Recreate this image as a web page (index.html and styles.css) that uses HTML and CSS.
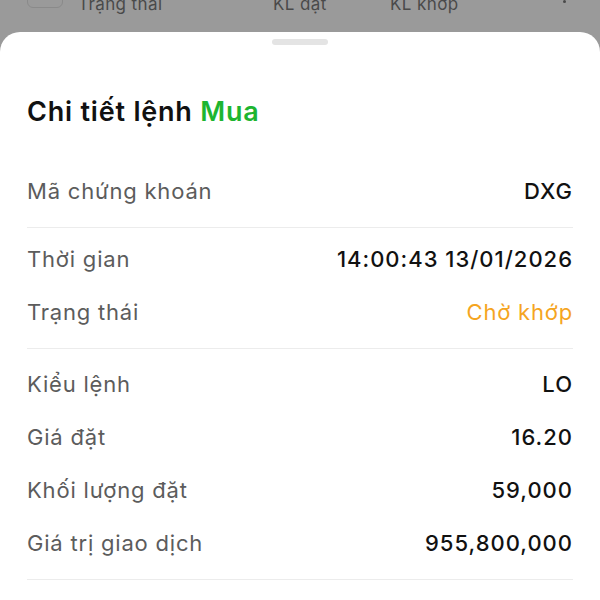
FILE: index.html
```html
<!DOCTYPE html>
<html lang="vi">
<head>
<meta charset="utf-8">
<title>Chi tiết lệnh</title>
<link rel="stylesheet" href="styles.css">
</head>
<body>
<div class="page">
  <div class="bg-head">
    <span class="bg-check"></span>
    <span class="bg-col">Trạng thái</span>
    <span class="bg-col">KL đặt</span>
    <span class="bg-col">KL khớp</span>
    <span class="bg-dot"></span>
  </div>
  <div class="sheet">
    <div class="handle"></div>
    <h1 class="title">Chi tiết lệnh <span class="buy">Mua</span></h1>
    <div class="group">
      <div class="row"><span class="label">Mã chứng khoán</span><span class="value">DXG</span></div>
    </div>
    <div class="group group-tight">
      <div class="row"><span class="label">Thời gian</span><span class="value">14:00:43 13/01/2026</span></div>
      <div class="row"><span class="label">Trạng thái</span><span class="value pending">Chờ khớp</span></div>
    </div>
    <div class="group group-loose">
      <div class="row"><span class="label">Kiểu lệnh</span><span class="value">LO</span></div>
      <div class="row"><span class="label">Giá đặt</span><span class="value">16.20</span></div>
      <div class="row"><span class="label">Khối lượng đặt</span><span class="value">59,000</span></div>
      <div class="row"><span class="label">Giá trị giao dịch</span><span class="value">955,800,000</span></div>
    </div>
  </div>
</div>
</body>
</html>
```
FILE: styles.css
```css
* { box-sizing: border-box; }
html, body { margin: 0; padding: 0; }
body {
  background: #9a9a9a;
  font-family: Inter, "Noto Sans", sans-serif;
  overflow: hidden;
}
.page {
  width: 600px;
  height: 600px;
  display: flex;
  flex-direction: column;
  overflow: hidden;
}
.bg-head {
  display: grid;
  grid-template-columns: 51px 195px 117px 173px auto;
  align-items: start;
  height: 20px;
  margin-top: -6px;
  margin-bottom: 18px;
  padding-left: 27px;
  font-size: 17px;
  line-height: 20px;
  letter-spacing: 0.4px;
  color: #4a4a4a;
}
.bg-check {
  width: 36px;
  height: 24px;
  margin-top: -10px;
  border: 1.5px solid #8a8a8a;
  border-radius: 6px;
}
.bg-dot {
  width: 3px;
  height: 3px;
  margin-top: 6px;
  border-radius: 50%;
  background: #4a4a4a;
}
.sheet {
  flex: 1;
  background: #fff;
  border-radius: 20px 20px 0 0;
  padding: 7px 27px 0;
}
.handle {
  width: 56px;
  height: 6px;
  margin: 0 auto;
  border-radius: 3px;
  background: #e4e4e4;
}
.title {
  margin: 51px 0 29px;
  font-size: 27px;
  line-height: 32px;
  font-weight: 600;
  color: #111;
  letter-spacing: 0.8px;
}
.buy { color: #1db530; }
.group {
  padding: 8px 0 9px;
  border-bottom: 1px solid #ececec;
}
.group-tight { padding-top: 5px; }
.group-loose { padding-top: 9px; }
.row {
  display: flex;
  justify-content: space-between;
  align-items: center;
  height: 53px;
  font-size: 22px;
  line-height: 53px;
  letter-spacing: 0.8px;
}
.label { color: #5c5c5c; }
.value { color: #111; font-weight: 500; letter-spacing: 1px; }
.pending { color: #f5a51f; font-weight: 400; letter-spacing: 0.8px; }
```
